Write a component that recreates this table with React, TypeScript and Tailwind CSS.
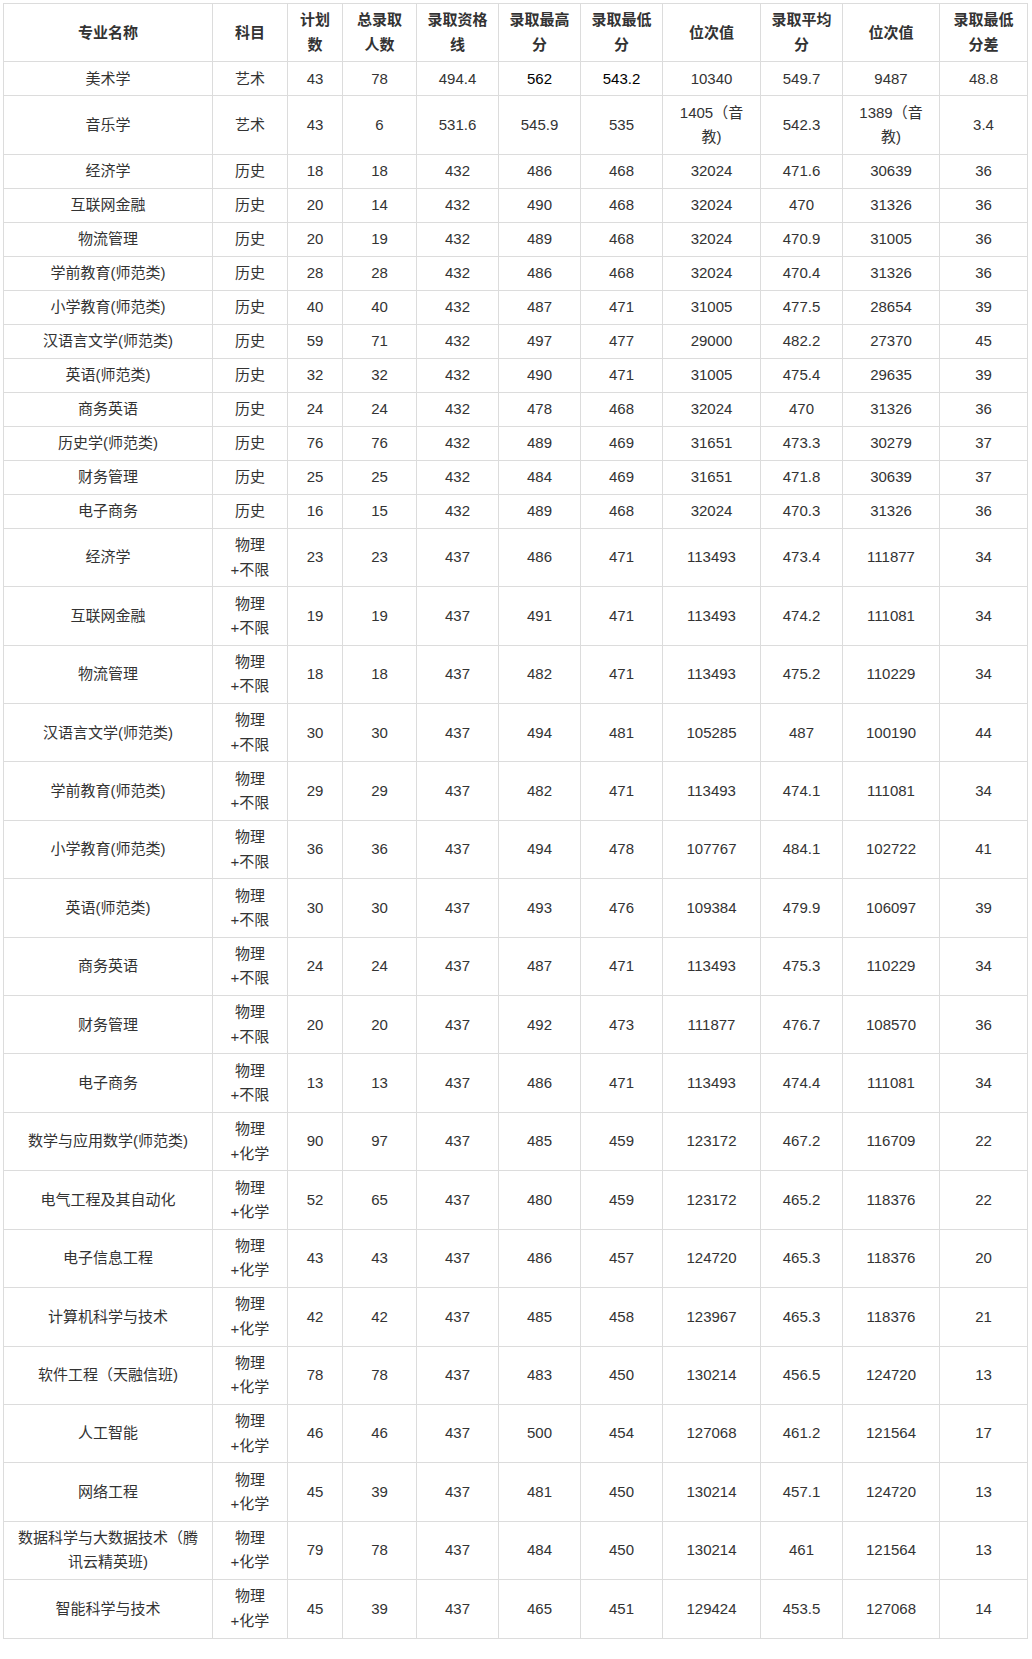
import React from "react";

type Cell = string | string[];

const header: Cell[] = [
  "专业名称",
  "科目",
  ["计划", "数"],
  ["总录取", "人数"],
  ["录取资格", "线"],
  ["录取最高", "分"],
  ["录取最低", "分"],
  "位次值",
  ["录取平均", "分"],
  "位次值",
  ["录取最低", "分差"],
];

const BX = ["物理", "+不限"];
const HX = ["物理", "+化学"];

const rows: Cell[][] = [
  ["美术学", "艺术", "43", "78", "494.4", "562", "543.2", "10340", "549.7", "9487", "48.8"],
  ["音乐学", "艺术", "43", "6", "531.6", "545.9", "535", ["1405（音", "教)"], "542.3", ["1389（音", "教)"], "3.4"],
  ["经济学", "历史", "18", "18", "432", "486", "468", "32024", "471.6", "30639", "36"],
  ["互联网金融", "历史", "20", "14", "432", "490", "468", "32024", "470", "31326", "36"],
  ["物流管理", "历史", "20", "19", "432", "489", "468", "32024", "470.9", "31005", "36"],
  ["学前教育(师范类)", "历史", "28", "28", "432", "486", "468", "32024", "470.4", "31326", "36"],
  ["小学教育(师范类)", "历史", "40", "40", "432", "487", "471", "31005", "477.5", "28654", "39"],
  ["汉语言文学(师范类)", "历史", "59", "71", "432", "497", "477", "29000", "482.2", "27370", "45"],
  ["英语(师范类)", "历史", "32", "32", "432", "490", "471", "31005", "475.4", "29635", "39"],
  ["商务英语", "历史", "24", "24", "432", "478", "468", "32024", "470", "31326", "36"],
  ["历史学(师范类)", "历史", "76", "76", "432", "489", "469", "31651", "473.3", "30279", "37"],
  ["财务管理", "历史", "25", "25", "432", "484", "469", "31651", "471.8", "30639", "37"],
  ["电子商务", "历史", "16", "15", "432", "489", "468", "32024", "470.3", "31326", "36"],
  ["经济学", BX, "23", "23", "437", "486", "471", "113493", "473.4", "111877", "34"],
  ["互联网金融", BX, "19", "19", "437", "491", "471", "113493", "474.2", "111081", "34"],
  ["物流管理", BX, "18", "18", "437", "482", "471", "113493", "475.2", "110229", "34"],
  ["汉语言文学(师范类)", BX, "30", "30", "437", "494", "481", "105285", "487", "100190", "44"],
  ["学前教育(师范类)", BX, "29", "29", "437", "482", "471", "113493", "474.1", "111081", "34"],
  ["小学教育(师范类)", BX, "36", "36", "437", "494", "478", "107767", "484.1", "102722", "41"],
  ["英语(师范类)", BX, "30", "30", "437", "493", "476", "109384", "479.9", "106097", "39"],
  ["商务英语", BX, "24", "24", "437", "487", "471", "113493", "475.3", "110229", "34"],
  ["财务管理", BX, "20", "20", "437", "492", "473", "111877", "476.7", "108570", "36"],
  ["电子商务", BX, "13", "13", "437", "486", "471", "113493", "474.4", "111081", "34"],
  ["数学与应用数学(师范类)", HX, "90", "97", "437", "485", "459", "123172", "467.2", "116709", "22"],
  ["电气工程及其自动化", HX, "52", "65", "437", "480", "459", "123172", "465.2", "118376", "22"],
  ["电子信息工程", HX, "43", "43", "437", "486", "457", "124720", "465.3", "118376", "20"],
  ["计算机科学与技术", HX, "42", "42", "437", "485", "458", "123967", "465.3", "118376", "21"],
  ["软件工程（天融信班)", HX, "78", "78", "437", "483", "450", "130214", "456.5", "124720", "13"],
  ["人工智能", HX, "46", "46", "437", "500", "454", "127068", "461.2", "121564", "17"],
  ["网络工程", HX, "45", "39", "437", "481", "450", "130214", "457.1", "124720", "13"],
  ["数据科学与大数据技术（腾讯云精英班)", HX, "79", "78", "437", "484", "450", "130214", "461", "121564", "13"],
  ["智能科学与技术", HX, "45", "39", "437", "465", "451", "129424", "453.5", "127068", "14"],
];

const widths = [209, 75, 55, 74, 82, 82, 82, 98, 82, 97, 88];

function Content({ c }: { c: Cell }) {
  if (Array.isArray(c)) {
    return (
      <>
        {c.map((l, i) => (
          <React.Fragment key={i}>
            {i > 0 && <br />}
            {l}
          </React.Fragment>
        ))}
      </>
    );
  }
  return <>{c}</>;
}

export default function App() {
  return (
    <div className="bg-white min-h-[1659px] pt-[3px] pl-[3px] font-['Liberation_Sans','Noto_Sans_CJK_SC',sans-serif] text-[15px] text-[#333]">
      <table className="w-[1024px] table-fixed border-collapse">
        <colgroup>
          {widths.map((w, i) => (
            <col key={i} style={{ width: w }} />
          ))}
        </colgroup>
        <thead>
          <tr>
            {header.map((h, i) => (
              <th
                key={i}
                className="border border-[#dcdcdc] px-2 py-[4.3px] leading-[24.4px] font-bold text-center align-middle text-[#333]"
              >
                <Content c={h} />
              </th>
            ))}
          </tr>
        </thead>
        <tbody>
          {rows.map((r, ri) => (
            <tr key={ri}>
              {r.map((c, ci) => {
                const dark = ri === 0 && (ci === 5 || ci === 6);
                return (
                  <td
                    key={ci}
                    className={
                      "border border-[#dcdcdc] px-2 py-[4.3px] leading-[24.4px] text-center align-middle " +
                      (dark ? "text-black" : "text-[#333]")
                    }
                  >
                    <Content c={c} />
                  </td>
                );
              })}
            </tr>
          ))}
        </tbody>
      </table>
    </div>
  );
}
